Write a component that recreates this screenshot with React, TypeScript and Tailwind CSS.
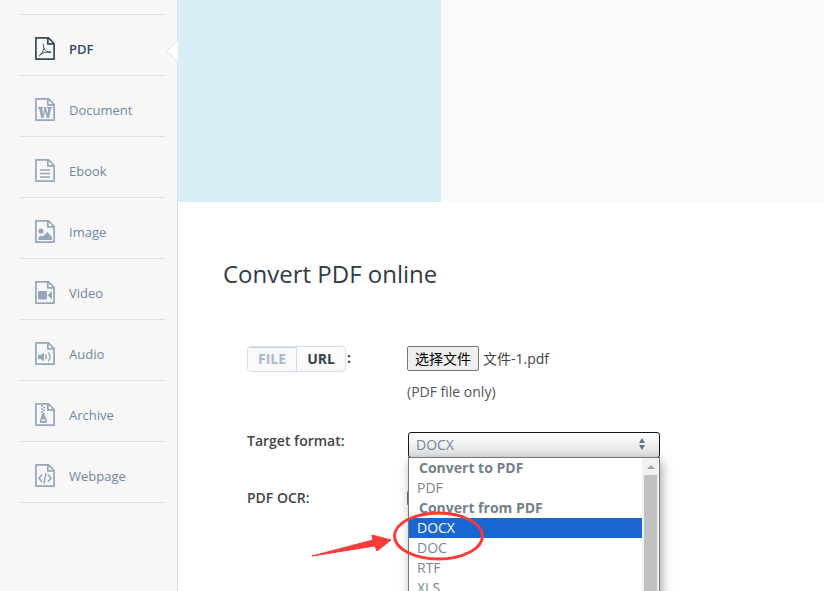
import { useState, type ReactNode } from "react";

const glyphs: Record<string, ReactNode> = {
  PDF: (
    <path
      d="M9 7c-1 0-.7 2.200.1 4.200C8.500 13.800 6.300 17.500 4 19.300M9.100 11.200c1.200 2.600 3.700 4.800 7 4.300M4.400 18.200c1.200-1.700 4.600-3.200 11.400-3.300"
      fill="none"
      stroke="currentColor"
      strokeWidth="1"
    />
  ),
  Document: (
    <path
      d="M3 9h5v1.500H7l1.100 5.200L9.300 9h1.600l1.500 6.700 1-5.200h-1.100V9H17v1.500h-1L14 20h-2.200L10 13.200 8.400 20H6.200L4.200 10.500H3z"
      fill="currentColor"
    />
  ),
  Ebook: (
    <path d="M5 11h10M5 14.500h10M5 18h10" stroke="currentColor" strokeWidth="1.600" />
  ),
  Image: (
    <g fill="currentColor">
      <circle cx="6" cy="11" r="2.600" />
      <path d="M3.500 20v-2.500L6 15.500l1.500 1L12.500 12l4.500 5v3z" />
    </g>
  ),
  Video: (
    <g fill="currentColor">
      <rect x="3" y="10" width="9" height="8.500" rx="1.300" />
      <path d="M12.500 14.200 17 10v8.500z" />
    </g>
  ),
  Audio: (
    <g>
      <path d="M3 13h2.500L9 10.500v9L5.500 17H3z" fill="currentColor" />
      <path
        d="M10.500 12.500q1.600 2.500 0 5M13.300 10.500q3.400 4.500 0 9"
        fill="none"
        stroke="currentColor"
        strokeWidth="1.400"
      />
    </g>
  ),
  Archive: (
    <g>
      <path
        d="M6 3h2M8 4.500h2M6 6h2M8 7.500h2M6 9h2M8 10.500h2"
        stroke="currentColor"
        strokeWidth="1.300"
      />
      <path
        fillRule="evenodd"
        d="M7 11h2.500l2.300 6.500q.3 2.500-2 2.500H6.800q-2.300 0-2-2.500zM6.500 16.500v1.500h3.600v-1.500z"
        fill="currentColor"
      />
    </g>
  ),
  Webpage: (
    <path
      d="M7.200 10.500 4 14.200l3.200 3.700M12.800 10.500l3.200 3.700-3.200 3.700M11 9 9 20"
      fill="none"
      stroke="currentColor"
      strokeWidth="1.500"
    />
  ),
};

const categories = ["PDF", "Document", "Ebook", "Image", "Video", "Audio", "Archive", "Webpage"];

function FileIcon({ name }: { name: string }) {
  return (
    <svg viewBox="0 0 20 23" className="h-[23px] w-5 shrink-0" aria-hidden="true">
      <path
        d="M.9.900h12.600L19.100 6.500v15.600H.9zM12.800.900v6h6.300"
        fill="none"
        stroke="currentColor"
        strokeWidth="1.700"
        strokeLinejoin="round"
      />
      {glyphs[name]}
    </svg>
  );
}

function Sidebar() {
  return (
    <nav className="w-[178px] shrink-0 border-r border-[#d9e0e7] bg-[#f7f7f7] pt-3.5 pr-3 pl-5">
      <ul className="border-t border-[#d6e0ea]">
        {categories.map((name) => {
          const active = name === "PDF";
          return (
            <li key={name} className="relative border-b border-[#d6e0ea]">
              <a
                href={"#" + name.toLowerCase()}
                className={
                  "flex h-[60px] items-center gap-3.5 pt-2 pl-[15px] text-[13px] " +
                  (active ? "font-semibold text-[#34495e]" : "text-[#7187a2]")
                }
              >
                <span className={"pb-0.5 " + (active ? "text-[#34495e]" : "text-[#96a6ba]")}>
                  <FileIcon name={name} />
                </span>
                {name}
              </a>
              {active && (
                <svg
                  viewBox="0 0 12 22"
                  className="absolute top-[25px] -right-[13px] h-[22px] w-3"
                  aria-hidden="true"
                >
                  <path d="M12 0 .700 11 12 22z" fill="#fff" />
                  <path d="M12 0 .700 11 12 22" fill="none" stroke="#d6e0ea" />
                </svg>
              )}
            </li>
          );
        })}
      </ul>
    </nav>
  );
}

const options = [
  { label: "Convert to PDF", group: true },
  { label: "PDF" },
  { label: "Convert from PDF", group: true },
  { label: "DOCX" },
  { label: "DOC" },
  { label: "RTF" },
  { label: "XLS" },
];

function FormatPicker() {
  const [format, setFormat] = useState("DOCX");
  return (
    <div className="relative ml-px w-[252px]">
      <select
        id="format"
        value={format}
        onChange={(e) => setFormat(e.target.value)}
        className="block h-[26px] w-full appearance-none rounded-[3px] border border-[#10141c] bg-linear-to-b from-white to-[#dcdedf] px-[7px] text-sm leading-6 text-[#7b858f]"
      >
        {options
          .filter((o) => !o.group)
          .map((o) => (
            <option key={o.label}>{o.label}</option>
          ))}
      </select>
      <svg
        viewBox="0 0 6 12"
        className="pointer-events-none absolute top-1.5 right-[15px] h-3 w-1.5"
        aria-hidden="true"
      >
        <path d="M0 5 3 0l3 5zM0 7l3 5 3-5z" fill="#637282" />
      </svg>
      <div className="absolute top-[25px] left-0 flex h-[200px] w-full overflow-hidden border border-[#767676] bg-white shadow-[2px_4px_10px_rgba(0,0,0,0.35)]">
        <ul role="listbox" aria-label="Formats" className="min-w-0 flex-1 text-sm leading-5 text-[#7b858f]">
          {options.map((o) =>
            o.group ? (
              <li key={o.label} role="presentation" className="pl-2.5 font-bold text-[#73808c]">
                {o.label}
              </li>
            ) : (
              <li
                key={o.label}
                role="option"
                aria-selected={o.label === format}
                onClick={() => setFormat(o.label)}
                className={"pl-2 " + (o.label === format ? "bg-[#1967d2] text-white" : "")}
              >
                {o.label}
              </li>
            ),
          )}
        </ul>
        <div className="flex w-[17px] flex-col items-center bg-[#f1f1f1]">
          <svg viewBox="0 0 8 4" className="mt-[7px] mb-1.5 h-1 w-2 shrink-0" aria-hidden="true">
            <path d="M0 4 4 0l4 4z" fill="#a3a3a3" />
          </svg>
          <div className="w-[13px] flex-1 bg-[#c1c1c1]" />
        </div>
      </div>
      <svg
        viewBox="0 0 176 54"
        className="pointer-events-none absolute top-[78px] -left-[98px] h-[54px] w-44"
        aria-hidden="true"
      >
        <ellipse cx="128.500" cy="26" rx="44" ry="23" fill="none" stroke="#fb3a3a" strokeWidth="3" />
        <path d="m2 46 61-16-1-5 19 5-14 11-2-5z" fill="#fb3a3a" stroke="#fb3a3a" strokeLinejoin="round" />
      </svg>
    </div>
  );
}

export default function App() {
  const [source, setSource] = useState("URL");
  const [fileName, setFileName] = useState("文件-1.pdf");
  return (
    <div className="flex h-screen overflow-hidden bg-white font-['Open_Sans','Noto_Sans_CJK_SC',sans-serif] text-sm text-[#444]">
      <Sidebar />
      <main className="min-w-0 flex-1">
        <div className="flex h-[202px] bg-[#fafafa]">
          <div className="w-[263px] bg-[#d9edf7]" />
        </div>
        <div className="px-[45px] pt-14">
          <h1 className="text-2xl leading-8 text-[#2f3a47]">Convert PDF online</h1>
          <form className="mt-14 grid grid-cols-[160px_1fr] pl-6">
            <div className="flex h-[26px] items-center gap-px font-bold text-[#34404d]">
              <div className="flex h-[26px] overflow-hidden rounded border border-[#d2dde9] bg-linear-to-b from-white to-[#f7f7f7]">
                <button
                  type="button"
                  onClick={() => setSource("FILE")}
                  className="w-[49px] border-r border-[#d2dde9] bg-[#f9f9f9] pb-px text-[#a9b7ca] shadow-[inset_0_1px_1px_#c9d2dc]"
                >
                  FILE
                </button>
                <button
                  type="button"
                  aria-pressed={source === "URL"}
                  onClick={() => setSource("URL")}
                  className="w-12 pb-px"
                >
                  URL
                </button>
              </div>
              <span className="pb-0.5">:</span>
            </div>
            <div>
              <div className="flex h-[26px] items-start gap-1 leading-[25px] whitespace-nowrap">
                <label
                  htmlFor="file"
                  className="flex h-[25px] w-[72px] items-center justify-center rounded-[2px] border border-[#767676] bg-[#efefef] text-black"
                >
                  选择文件
                </label>
                <input
                  id="file"
                  type="file"
                  accept=".pdf"
                  className="sr-only"
                  onChange={(e) => setFileName(e.target.files?.[0]?.name ?? "")}
                />
                <span>{fileName}</span>
              </div>
              <p className="mt-2 leading-6 text-[#555]">(PDF file only)</p>
            </div>
            <label htmlFor="format" className="mt-[25px] leading-6 font-semibold">
              Target format:
            </label>
            <div className="mt-7">
              <FormatPicker />
            </div>
            <label htmlFor="ocr" className="mt-7 leading-6 font-semibold">
              PDF OCR:
            </label>
            <div className="mt-8">
              <input id="ocr" type="checkbox" className="block size-4" />
            </div>
          </form>
        </div>
      </main>
    </div>
  );
}
